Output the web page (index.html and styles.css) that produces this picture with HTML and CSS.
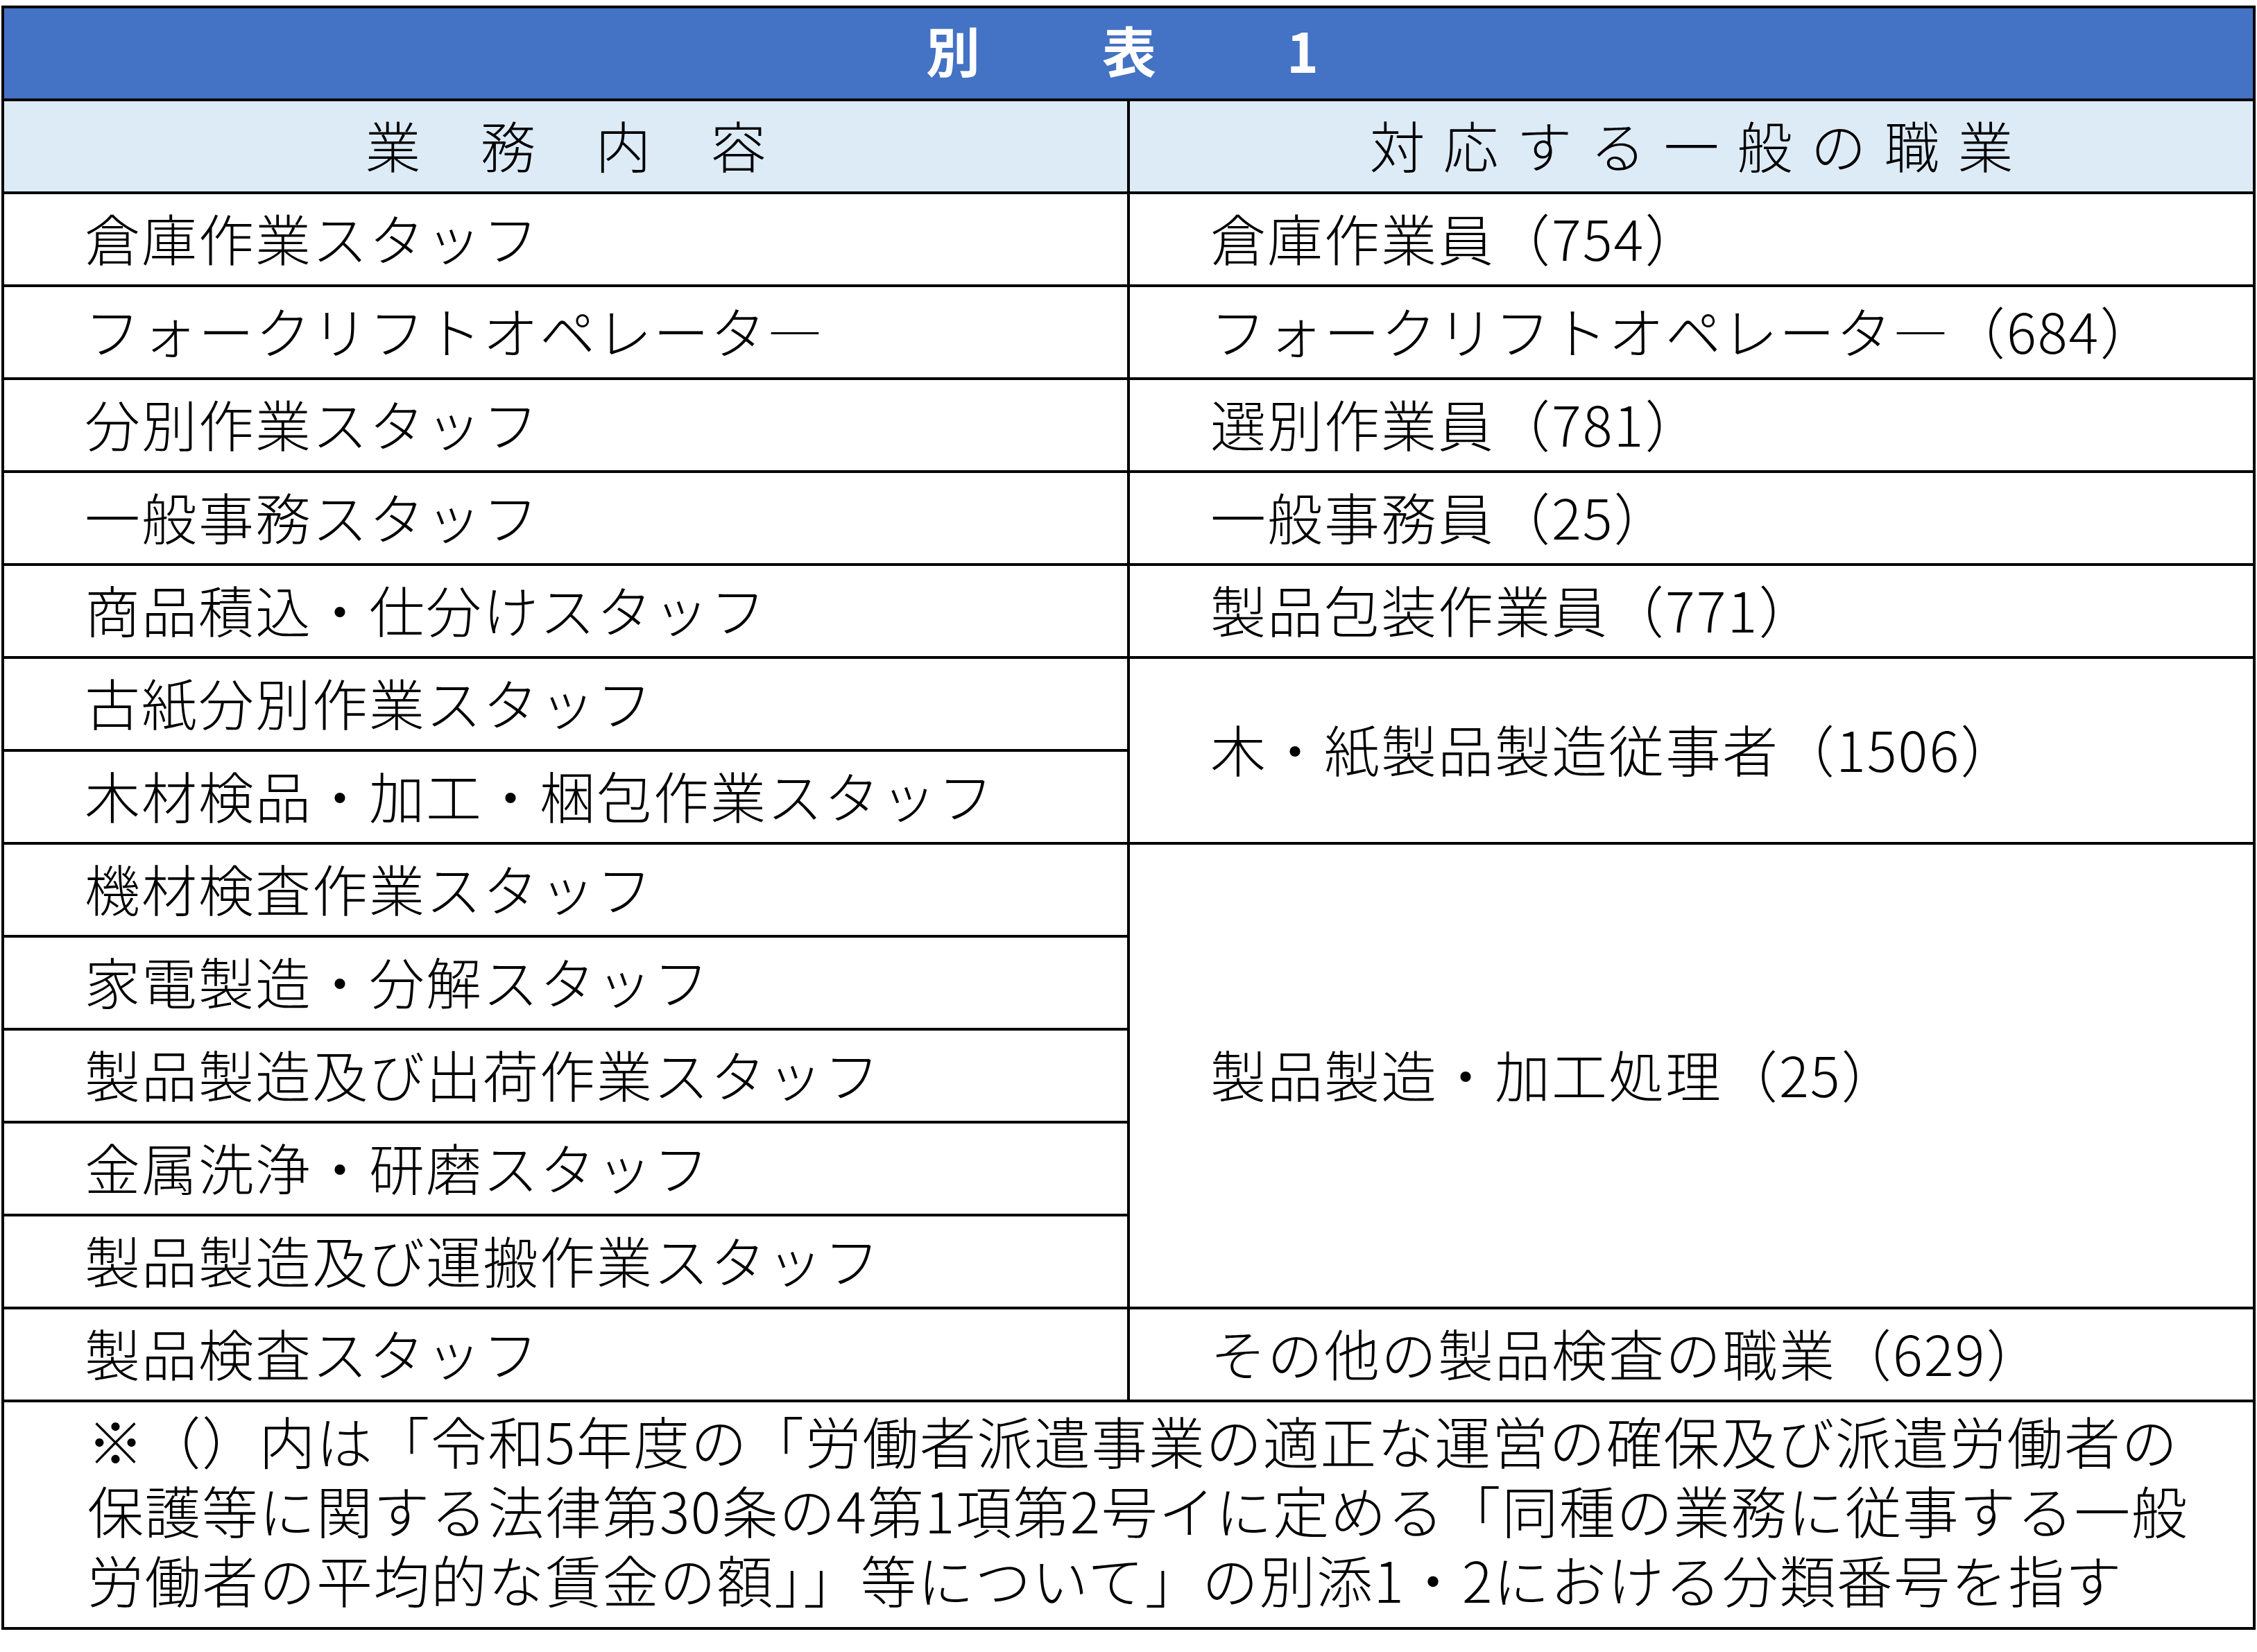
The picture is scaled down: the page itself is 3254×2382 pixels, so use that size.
FILE: index.html
```html
<!DOCTYPE html>
<html lang="ja">
<head>
<meta charset="utf-8">
<title>別表1</title>
<link rel="stylesheet" href="styles.css">
</head>
<body>
<table class="sheet">
  <colgroup>
    <col class="col-a">
    <col class="col-b">
  </colgroup>
  <tr class="row title-row">
    <td colspan="2" class="title"><span class="t-ch">別</span><span class="t-ch">表</span><span class="t-ch t-num">1</span></td>
  </tr>
  <tr class="row head-row">
    <td class="head head-left">業　務　内　容</td>
    <td class="head head-right">対応する一般の職業</td>
  </tr>
  <tr class="row"><td class="cell">倉庫作業スタッフ</td><td class="cell">倉庫作業員（754）</td></tr>
  <tr class="row"><td class="cell">フォークリフトオペレータ—</td><td class="cell">フォークリフトオペレータ—（684）</td></tr>
  <tr class="row"><td class="cell">分別作業スタッフ</td><td class="cell">選別作業員（781）</td></tr>
  <tr class="row"><td class="cell">一般事務スタッフ</td><td class="cell">一般事務員（25）</td></tr>
  <tr class="row"><td class="cell">商品積込・仕分けスタッフ</td><td class="cell">製品包装作業員（771）</td></tr>
  <tr class="row"><td class="cell">古紙分別作業スタッフ</td><td class="cell" rowspan="2">木・紙製品製造従事者（1506）</td></tr>
  <tr class="row"><td class="cell">木材検品・加工・梱包作業スタッフ</td></tr>
  <tr class="row"><td class="cell">機材検査作業スタッフ</td><td class="cell" rowspan="5">製品製造・加工処理（25）</td></tr>
  <tr class="row"><td class="cell">家電製造・分解スタッフ</td></tr>
  <tr class="row"><td class="cell">製品製造及び出荷作業スタッフ</td></tr>
  <tr class="row"><td class="cell">金属洗浄・研磨スタッフ</td></tr>
  <tr class="row"><td class="cell">製品製造及び運搬作業スタッフ</td></tr>
  <tr class="row"><td class="cell">製品検査スタッフ</td><td class="cell">その他の製品検査の職業（629）</td></tr>
  <tr class="note-row">
    <td colspan="2" class="note"><div class="note-line">※（）内は「令和5年度の「労働者派遣事業の適正な運営の確保及び派遣労働者の</div><div class="note-line">保護等に関する法律第30条の4第1項第2号イに定める「同種の業務に従事する一般</div><div class="note-line">労働者の平均的な賃金の額」」等について」の別添1・2における分類番号を指す</div></td>
  </tr>
</table>
</body>
</html>
```
FILE: styles.css
```css
html, body {
  margin: 0;
  padding: 0;
  background: #ffffff;
}
body {
  padding: 8px 2px 0 2px;
  font-family: "Noto Sans CJK JP", "Noto Sans", sans-serif;
  font-weight: 300;
  color: #000000;
}
.sheet {
  border-collapse: collapse;
  width: 3246px;
  table-layout: fixed;
}
.col-a { width: 1623px; }
.col-b { width: 1623px; }
.sheet td {
  border: 4px solid #000000;
  padding: 0;
  vertical-align: middle;
  white-space: nowrap;
}
.row { height: 134px; }
.title {
  background: #4472c4;
  color: #ffffff;
  font-weight: 700;
  font-size: 78px;
  text-align: center;
  line-height: 1;
  padding-bottom: 12px !important;
}
.t-ch {
  display: inline-block;
  margin: 0 88px;
}
.t-ch:first-child { margin-left: 70px; }
.t-num { margin-left: 100px; }
.head {
  background: #ddebf7;
  font-size: 80px;
  text-align: center;
  line-height: 1;
  padding-bottom: 8px !important;
}
.head-left { letter-spacing: 3px; padding-left: 3px !important; }
.head-right { letter-spacing: 26px; padding-left: 26px !important; }
.cell {
  font-size: 80px;
  line-height: 1;
  padding-left: 116px !important;
  padding-bottom: 8px !important;
  letter-spacing: 2px;
}
.note-row { height: 328px; }
.note {
  font-size: 81px;
  padding-left: 120px !important;
  padding-bottom: 16px !important;
  letter-spacing: 1.5px;
}
.note-line {
  height: 100px;
  line-height: 100px;
}
```
